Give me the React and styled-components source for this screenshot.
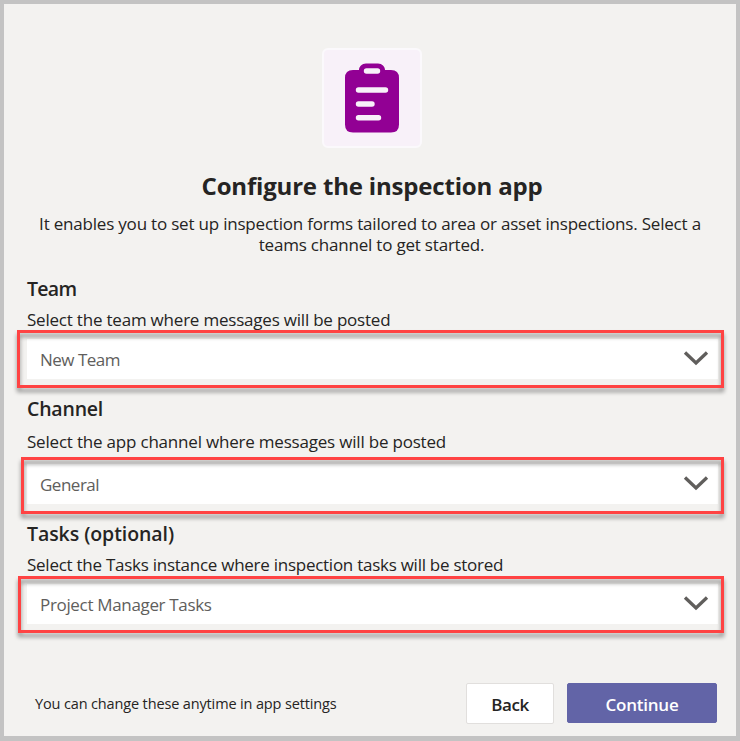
import React from "react";
import styled, { createGlobalStyle } from "styled-components";

const GlobalStyle = createGlobalStyle`
  *, *::before, *::after { box-sizing: border-box; }
  body { margin: 0; }
`;

const Page = styled.main`
  display: flex;
  flex-direction: column;
  width: 740px;
  height: 741px;
  padding: 44px 18px 0 23px;
  border: 4px solid #c3c3c3;
  border-bottom-width: 5px;
  background: #f3f2f0;
  color: #252423;
  font-family: "Open Sans", "Noto Sans", sans-serif;
  font-size: 17px;
  overflow: hidden;
`;

const Intro = styled.header`
  display: flex;
  flex-direction: column;
  align-items: center;
  margin-right: 1px;
  text-align: center;
`;

const AppTile = styled.div`
  width: 100px;
  height: 100px;
  border: 2px solid #fbf9fc;
  border-radius: 6px;
  background: #f8f1f9;

  svg { display: block; margin: -2px; }
`;

const Title = styled.h1`
  margin: 22px 0 0;
  font-size: 24px;
  font-weight: 700;
  line-height: 32px;
  letter-spacing: -0.18px;
`;

const Description = styled.p`
  width: 684px;
  margin: 11px 0 0;
  padding-right: 4px;
  line-height: 21px;
  letter-spacing: -0.2px;
  white-space: nowrap;
`;

const SecondLine = styled.span`
  padding-left: 3px;
`;

const Field = styled.section`
  margin-top: ${(p) => p.$gap}px;
`;

const FieldTitle = styled.h2`
  margin: 0;
  font-size: 19.5px;
  font-weight: 600;
  line-height: 28px;
  letter-spacing: ${(p) => p.$tracking}px;
`;

const FieldLabel = styled.p`
  margin: ${(p) => p.$gap}px 0 0;
  line-height: 22px;
  letter-spacing: ${(p) => p.$tracking}px;
`;

const Select = styled.div`
  position: relative;
  display: flex;
  align-items: center;
  justify-content: space-between;
  width: 691px;
  height: 40px;
  margin-top: ${(p) => p.$gap}px;
  padding: 0 9px 0 13px;
  background: #fff;
  color: #605e5c;
  letter-spacing: ${(p) => p.$tracking}px;
`;

const Highlight = styled.span`
  position: absolute;
  top: ${(p) => p.$top}px;
  right: -6px;
  bottom: ${(p) => p.$bottom}px;
  left: ${(p) => p.$left}px;
  border: 3px solid #ff4343;
  filter: drop-shadow(0 4px 2px rgba(0, 0, 0, 0.42));
  pointer-events: none;
`;

const Chevron = styled.svg`
  flex: none;
  margin-top: -3px;
`;

const Footer = styled.footer`
  display: flex;
  align-items: flex-start;
  margin: 59px 1px 0 8px;
`;

const Note = styled.span`
  flex: 1;
  font-size: 14.5px;
  line-height: 41px;
  letter-spacing: -0.14px;
`;

const Button = styled.button`
  width: ${(p) => (p.$primary ? 150 : 88)}px;
  height: ${(p) => (p.$primary ? 40 : 41)}px;
  margin-left: ${(p) => (p.$primary ? 13 : 0)}px;
  padding: 2px 0 0;
  border: 1px solid ${(p) => (p.$primary ? "#6264a7" : "#e1dfdd")};
  border-radius: 2px;
  background: ${(p) => (p.$primary ? "#6264a7" : "#fff")};
  color: ${(p) => (p.$primary ? "#fff" : "#252423")};
  font: 600 17px "Open Sans", "Noto Sans", sans-serif;
  letter-spacing: ${(p) => (p.$primary ? -0.22 : -0.45)}px;
`;

const fields = [
  {
    title: "Team", titleTracking: -0.7, gap: 20,
    label: "Select the team where messages will be posted", labelGap: 6, labelTracking: -0.21,
    value: "New Team", valueTracking: -0.5, selectGap: 8,
    frame: { $top: -9, $bottom: -9, $left: -10 },
  },
  {
    title: "Channel", titleTracking: -0.2, gap: 16,
    label: "Select the app channel where messages will be posted", labelGap: 8, labelTracking: -0.2,
    value: "General", valueTracking: -0.5, selectGap: 11,
    frame: { $top: -7, $bottom: -10, $left: -6 },
  },
  {
    title: "Tasks (optional)", titleTracking: -0.07, gap: 16,
    label: "Select the Tasks instance where inspection tasks will be stored", labelGap: 6, labelTracking: -0.26,
    value: "Project Manager Tasks", valueTracking: -0.33, selectGap: 8,
    frame: { $top: -8, $bottom: -9, $left: -9 },
  },
];

export default function App() {
  return (
    <>
      <GlobalStyle />
      <Page>
        <Intro>
          <AppTile>
            <svg width="100" height="100" viewBox="0 0 100 100" aria-hidden="true">
              <path
                fill="#920094"
                d="M31 22H37C37 18.500 40 15.500 44 15.500H56C60 15.500 63 18.500 63 22H69Q77 22 77 30V76.500Q77 84.500 69 84.500H31Q23 84.500 23 76.500V30Q23 22 31 22Z"
              />
              <g stroke="#f8f1f9" strokeWidth="5.400" strokeLinecap="round">
                <path d="M44.500 23H55.500M36.500 42H63.500M36.500 56H50M36.500 69.800H56.500" />
              </g>
            </svg>
          </AppTile>
          <Title>Configure the inspection app</Title>
          <Description>
            It enables you to set up inspection forms tailored to area or asset inspections. Select a
            <br />
            <SecondLine>teams channel to get started.</SecondLine>
          </Description>
        </Intro>

        {fields.map((f) => (
          <Field key={f.title} $gap={f.gap}>
            <FieldTitle $tracking={f.titleTracking}>{f.title}</FieldTitle>
            <FieldLabel $gap={f.labelGap} $tracking={f.labelTracking}>{f.label}</FieldLabel>
            <Select $gap={f.selectGap} $tracking={f.valueTracking}>
              {f.value}
              <Chevron width="26" height="16" viewBox="0 0 26 16" fill="none" aria-hidden="true">
                <path d="M2 2.500L13 13L24 2.500" stroke="#605e5c" strokeWidth="3.300" />
              </Chevron>
              <Highlight {...f.frame} />
            </Select>
          </Field>
        ))}

        <Footer>
          <Note>You can change these anytime in app settings</Note>
          <Button>Back</Button>
          <Button $primary>Continue</Button>
        </Footer>
      </Page>
    </>
  );
}
